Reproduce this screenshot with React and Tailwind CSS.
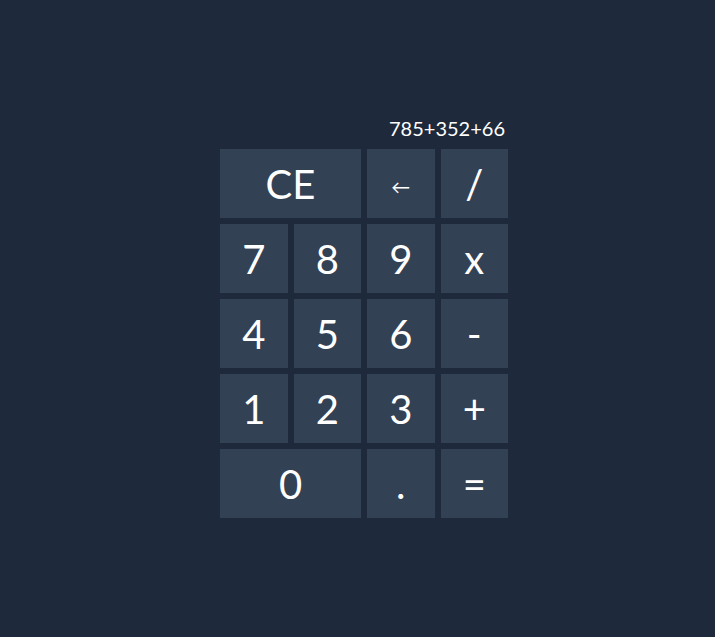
import React from "react";

const keys = [
  { label: "CE", span: "col-span-2" },
  { label: "←", small: true },
  { label: "/" },
  { label: "7" },
  { label: "8" },
  { label: "9" },
  { label: "x" },
  { label: "4" },
  { label: "5" },
  { label: "6" },
  { label: "-" },
  { label: "1" },
  { label: "2" },
  { label: "3" },
  { label: "+" },
  { label: "0", span: "col-span-2" },
  { label: "." },
  { label: "=" },
];

export default function App() {
  return (
    <div
      className="min-h-screen bg-[#1e293b] flex items-center justify-center text-white"
      style={{ fontFamily: "Lato, 'Open Sans', sans-serif" }}
    >
      <div className="pl-[13px]">
        <div className="w-[288px] flex flex-col">
          {/* display */}
          <div className="h-[30px] pr-[3px] text-right text-[20px] leading-[18px]">785+352+66</div>

          {/* keypad */}
          <div className="grid grid-cols-4 auto-rows-[69px] gap-[6px]">
            {keys.map((k) => (
              <button
                key={k.label}
                className={`${k.span || ""} bg-[#334155] flex items-center justify-center ${
                  k.small ? "text-[19px] pt-[5px]" : "text-[40px]"
                } leading-none`}
              >
                {k.label}
              </button>
            ))}
          </div>
        </div>
      </div>
    </div>
  );
}
